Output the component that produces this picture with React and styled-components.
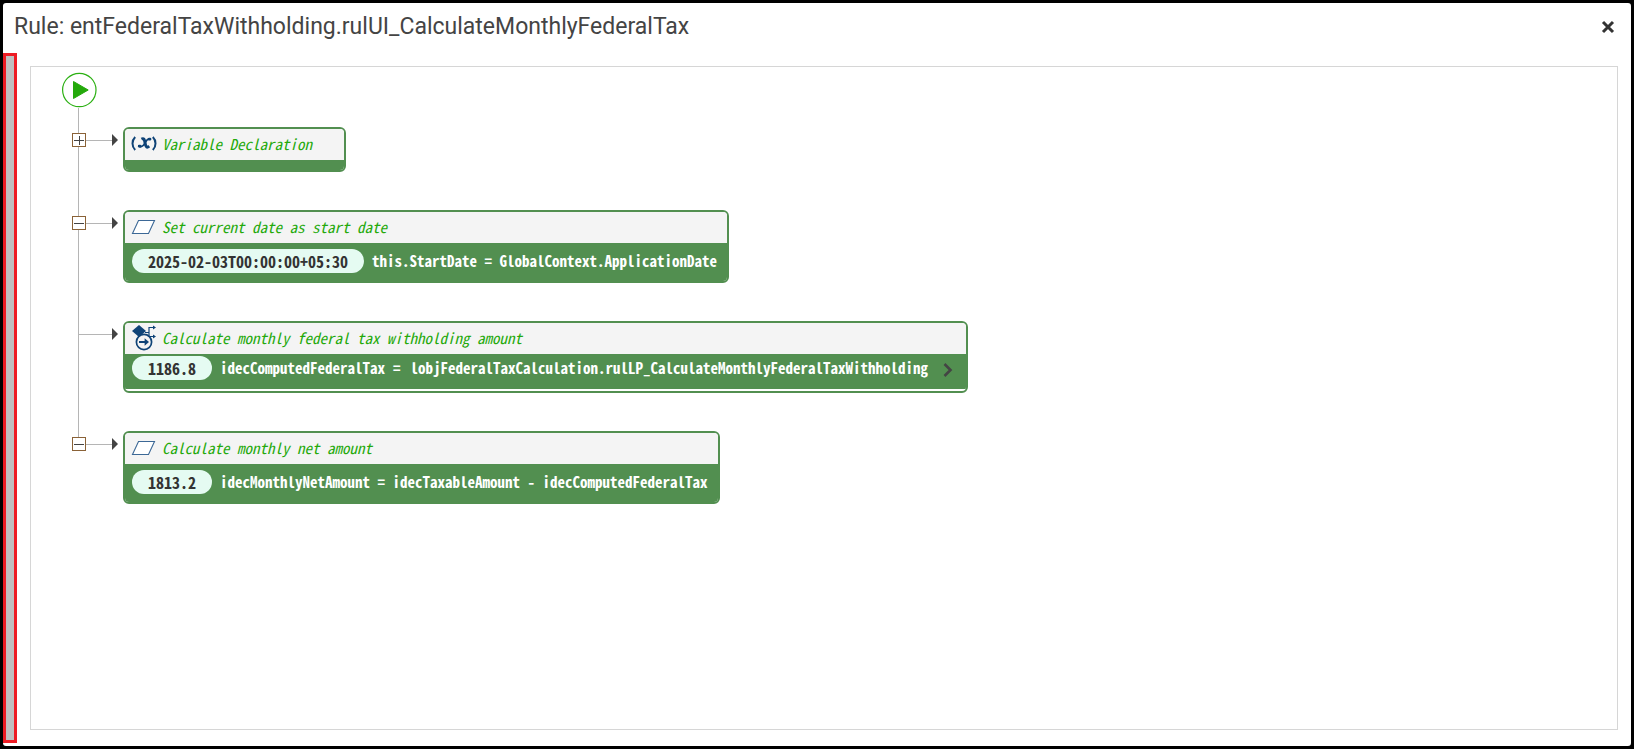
import React from 'react';
import styled, { createGlobalStyle } from 'styled-components';

const GlobalStyle = createGlobalStyle`
  * {
    box-sizing: border-box;
  }
  body {
    margin: 0;
    background: #000;
  }
`;

const mono = `Consolas, 'Noto Sans Mono CJK SC', 'Liberation Mono', monospace`;

const steps = [
  {
    id: 'variables',
    toggle: 'expand',
    icon: 'variable',
    title: 'Variable Declaration',
  },
  {
    id: 'start-date',
    toggle: 'collapse',
    icon: 'assign',
    title: 'Set current date as start date',
    value: '2025-02-03T00:00:00+05:30',
    expression: 'this.StartDate = GlobalContext.ApplicationDate',
  },
  {
    id: 'federal-tax',
    icon: 'callRule',
    title: 'Calculate monthly federal tax withholding amount',
    value: '1186.8',
    expression: 'idecComputedFederalTax',
    call: 'lobjFederalTaxCalculation.rulLP_CalculateMonthlyFederalTaxWithholding',
  },
  {
    id: 'net-amount',
    toggle: 'collapse',
    icon: 'assign',
    title: 'Calculate monthly net amount',
    value: '1813.2',
    expression: 'idecMonthlyNetAmount = idecTaxableAmount - idecComputedFederalTax',
  },
];

function App() {
  return (
    <>
      <GlobalStyle />
      <Dialog>
        <Header>
          <Title>Rule: entFederalTaxWithholding.rulUI_CalculateMonthlyFederalTax</Title>
          <CloseButton aria-label="Close">
            <svg width="14" height="14" viewBox="0 0 14 14">
              <path d="M2 2l10 10M12 2L2 12" stroke="#333" strokeWidth="3" />
            </svg>
          </CloseButton>
        </Header>
        <Content>
          <Splitter />
          <Canvas>
            <StartNode />
            <Steps>
              {steps.map((step) => (
                <Step key={step.id} step={step} />
              ))}
            </Steps>
          </Canvas>
        </Content>
      </Dialog>
    </>
  );
}

function Step({ step }) {
  return (
    <StepItem>
      <Connector $plain={!step.toggle}>
        {step.toggle && <Toggle kind={step.toggle} />}
        <ConnectorLine />
        <svg width="6" height="12" viewBox="0 0 6 12">
          <path d="M0 0l6 6-6 6z" fill="#444" />
        </svg>
      </Connector>
      <Card>
        <CardHeader>
          <StepIcon name={step.icon} />
          <CardTitle>{step.title}</CardTitle>
        </CardHeader>
        {step.value ? (
          <CardBody $call={!!step.call}>
            <Value>{step.value}</Value>
            <Expression>{step.expression}</Expression>
            {step.call && (
              <>
                <Equals>=</Equals>
                <Expression>{step.call}</Expression>
                <OpenButton aria-label="Open rule">
                  <svg width="10" height="14" viewBox="0 0 10 14">
                    <path d="M1.5 1l6 6-6 6" fill="none" stroke="#444" strokeWidth="2.6" />
                  </svg>
                </OpenButton>
              </>
            )}
          </CardBody>
        ) : (
          <CardFooter />
        )}
      </Card>
    </StepItem>
  );
}

function Toggle({ kind }) {
  return (
    <ToggleButton aria-label={kind}>
      <svg width="12" height="12" viewBox="0 0 12 12" shapeRendering="crispEdges">
        <path
          d={kind === 'expand' ? 'M1 6.5h10M6.5 2v9' : 'M1 6.5h10'}
          stroke="#444"
        />
      </svg>
    </ToggleButton>
  );
}

function StartNode() {
  return (
    <StartIcon width="35" height="36" viewBox="0 0 35 36">
      <circle cx="17.3" cy="18" r="16.7" fill="none" stroke="#2bb012" strokeWidth="1.2" />
      <path d="M11.5 9.5v17L26.2 18z" fill="#24a90b" stroke="#24a90b" strokeLinejoin="round" />
    </StartIcon>
  );
}

function StepIcon({ name }) {
  if (name === 'variable') {
    return (
      <svg width="26" height="24" viewBox="0 0 26 24" fill="none" stroke="#0f4377">
        <path d="M4.2 5C.6 8.5.6 14.5 4.2 18M21.8 5c3.6 3.5 3.6 9.5 0 13" strokeWidth="2" />
        <path d="M10.4 7c2.6-1.2 3.2.8 3.8 4.6.6 3.4 1.6 4.6 4 2.6" strokeWidth="3" />
        <path d="M19 7c-3-.8-4 2.4-5.2 4.4-1.4 2.4-2.8 4.2-5.6 3.2" strokeWidth="1.6" />
        <path d="M18.2 7.2h.8M8.2 14.2h.8" strokeWidth="2.8" strokeLinecap="round" />
      </svg>
    );
  }
  if (name === 'callRule') {
    return (
      <svg width="26" height="26" viewBox="0 0 26 26" fill="none" stroke="#0f4377">
        <path d="M8 0l7 6-7 6-7-6z" fill="#0f4377" stroke="none" />
        <path d="M14 7.5h4M23 2.5h-5v9h5" strokeWidth="1.2" />
        <path d="M22 .5l3 2-3 2zM22 9.5l3 2-3 2z" fill="#0f4377" stroke="none" />
        <circle cx="13" cy="17" r="7.6" fill="#f4f4f4" strokeWidth="1.7" />
        <path d="M8 17h8" strokeWidth="1.8" />
        <path d="M13.6 13.2l4.4 3.8-4.4 3.8z" fill="#0f4377" stroke="none" />
      </svg>
    );
  }
  return (
    <svg width="26" height="24" viewBox="0 0 26 24">
      <path d="M7.5 5.5h16l-6 13h-16z" fill="#fff" stroke="#3c6896" strokeWidth="1.1" />
    </svg>
  );
}

// Dialog
const Dialog = styled.main`
  display: flex;
  flex-direction: column;
  min-height: 100vh;
  border: 3px solid #000;
  border-radius: 6px;
  background: #fff;
`;
const Header = styled.header`
  display: flex;
  align-items: center;
  justify-content: space-between;
  height: 50px;
  padding: 0 13px 2px 11px;
`;
const Title = styled.h1`
  margin: 0;
  color: #444;
  font: 400 23px/32px Roboto, sans-serif;
`;
const CloseButton = styled.button`
  display: flex;
  padding: 3px;
  border: 0;
  background: none;
  cursor: pointer;
`;
const Content = styled.div`
  display: flex;
  flex: 1;
`;
const Splitter = styled.div`
  width: 14px;
  margin-bottom: 3px;
  border: 3px solid #ed1c24;
  background: #c0c0c0;
`;
const Canvas = styled.section`
  flex: 1;
  margin: 13px 13px 16px;
  padding: 5px 31px;
  border: 1px solid #d6d6d6;
`;

// Flow
const StartIcon = styled.svg`
  display: block;
`;
const Steps = styled.ol`
  margin: 0;
  padding: 0 0 0 10px;
  list-style: none;
`;
const StepItem = styled.li`
  display: flex;
  align-items: flex-start;
  padding-top: 38px;
  background: linear-gradient(#b5b5b5, #b5b5b5) 6px 0 / 1px 100% no-repeat;
  &:first-child {
    padding-top: 19px;
  }
  &:last-child {
    background-size: 1px 44px;
  }
`;
const Connector = styled.div`
  display: flex;
  align-items: center;
  width: 46px;
  height: 14px;
  margin: 6px 5px 0 0;
  padding-left: ${({ $plain }) => ($plain ? '6px' : '0')};
`;
const ConnectorLine = styled.span`
  flex: 1;
  height: 1px;
  background: #b5b5b5;
`;
const ToggleButton = styled.button`
  display: flex;
  align-items: center;
  justify-content: center;
  width: 14px;
  height: 14px;
  padding: 0;
  border: 1px solid #8a6237;
  background: #fff;
  cursor: pointer;
`;

// Card
const Card = styled.article`
  min-width: 223px;
  border: 2px solid #528f50;
  border-radius: 6px;
  overflow: hidden;
`;
const CardHeader = styled.header`
  display: flex;
  align-items: center;
  gap: 5px;
  height: 31px;
  padding: 0 6px 2px;
  background: #f4f4f4;
`;
const CardTitle = styled.h2`
  margin: 0;
  color: #24a90b;
  font: italic 500 15px/24px ${mono};
`;
const CardBody = styled.div`
  display: flex;
  align-items: center;
  gap: 8px;
  padding: ${({ $call }) => ($call ? '2px 13px 9px 7px' : '6px 10px 8px 7px')};
  margin-bottom: ${({ $call }) => ($call ? '2px' : '0')};
  background: #528f50;
`;
const CardFooter = styled.div`
  height: 10px;
  background: #528f50;
`;
const Value = styled.span`
  padding: 0 16px;
  border-radius: 12px;
  background: #e5fbf2;
  color: #333;
  font: 700 16px/24px ${mono};
`;
const Expression = styled.span`
  color: #fff;
  font: 700 15px/24px ${mono};
`;
const Equals = styled(Expression)`
  margin-right: 2px;
`;
const OpenButton = styled.button`
  display: flex;
  margin-left: 7px;
  padding: 4px 0 0;
  border: 0;
  background: none;
  cursor: pointer;
`;

export default App;
